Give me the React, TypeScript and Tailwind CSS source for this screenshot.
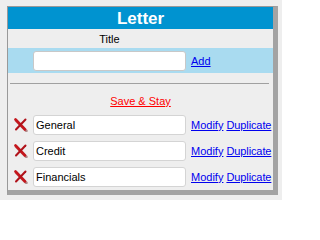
const font = { fontFamily: '"Liberation Sans", Arial, sans-serif' };

const sections = ["General", "Credit", "Financials"];

function DeleteIcon() {
  return (
    <svg width="14" height="14" viewBox="0 0 14 14" className="shrink-0">
      <path d="M2 2.5 L11.5 12" stroke="#7a1010" strokeWidth="3" strokeLinecap="square" opacity="0.35" transform="translate(0.8 0.8)" />
      <path d="M1.5 1.5 L11 11.5" stroke="#c4161c" strokeWidth="2.6" strokeLinecap="round" />
      <path d="M11.5 1.5 L2 11.5" stroke="#b0121a" strokeWidth="2" strokeLinecap="round" />
      <rect x="11.5" y="12.5" width="1.2" height="1" fill="#8a6a6a" />
    </svg>
  );
}

export default function App() {
  return (
    <div className="w-[282px] h-[200px] bg-[#eeeeee] pt-[6px] pl-[7px] text-[11px] text-black" style={font}>
      <div className="w-[271px] flex flex-col border-l border-t border-[#999999] border-r-[5px] border-b-[5px] border-r-[#a3a3a3] border-b-[#a3a3a3] bg-[#eeeeee]">
        <div className="h-[22px] bg-[#0093d0] flex items-center justify-center text-white font-bold text-[17px] leading-none">
          Letter
        </div>

        <div className="h-[19px] flex items-center pl-[25px] pt-[1px]">
          <div className="w-[153px] text-center">Title</div>
        </div>

        <div className="h-[25px] bg-[#a9dbf0] flex items-center pl-[25px] pt-[1px]">
          <input className="w-[153px] h-[20px] bg-white border border-[#c8c8c8] rounded-[3px] px-[2px] outline-none" />
          <a href="#" className="ml-[5px] text-[#0000ee] underline">Add</a>
        </div>

        <div className="h-[10px]" />
        <div className="mx-[2px] w-[259px] h-px bg-[#a0a0a0]" />

        <div className="h-[24px] flex items-end justify-center">
          <a href="#" className="text-[#ff0000] underline leading-[13px]">Save &amp; Stay</a>
        </div>

        <div className="flex flex-col gap-[6px] pt-[7px] pb-[3px]">
          {sections.map((name) => (
            <div key={name} className="flex items-center h-[20px]">
              <div className="w-[25px] flex justify-center pl-[1px]">
                <DeleteIcon />
              </div>
              <div className="w-[153px] h-[20px] bg-white border border-[#d4d4d4] rounded-[3px] pl-[2px] flex items-center">
                {name}
              </div>
              <a href="#" className="ml-[5px] text-[#0000ee] underline">Modify</a>
              <a href="#" className="ml-[3px] text-[#0000ee] underline tracking-[-0.1px]">Duplicate</a>
            </div>
          ))}
        </div>
      </div>
    </div>
  );
}
